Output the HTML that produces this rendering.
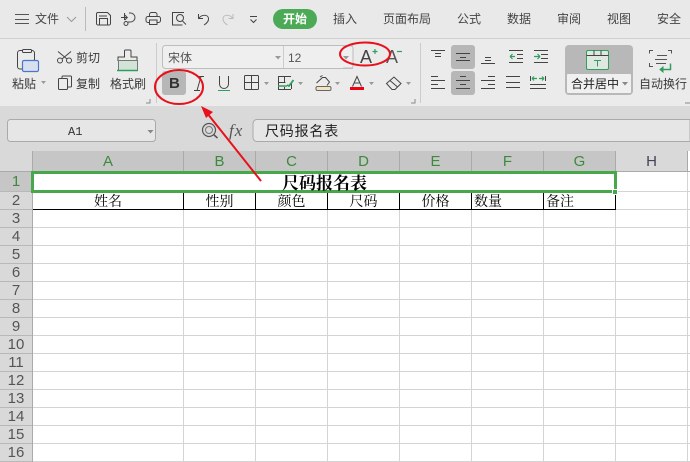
<!DOCTYPE html>
<html><head><meta charset="utf-8">
<style>
html,body{margin:0;padding:0}
body{width:690px;height:462px;overflow:hidden;position:relative;background:#fff;font-family:"Liberation Sans","Noto Sans CJK SC",sans-serif;color:#333}
.a{position:absolute;white-space:nowrap}
.t{position:absolute;white-space:nowrap;font-size:12px;line-height:16px;color:#3a3a3a}
.m{position:absolute;white-space:nowrap;font-size:12px;line-height:16px;top:11px;color:#444}
.ch{position:absolute;top:151px;height:20px;line-height:21px;text-align:center;font-size:15px;color:#3c8a3c;border-right:1px solid #aaa;box-sizing:border-box}
.rh{position:absolute;left:0;width:32px;height:18px;line-height:18px;text-align:center;font-size:15px;color:#555;box-sizing:border-box;border-bottom:1px solid #b8b8b8}
.c{position:absolute;top:192px;height:18px;line-height:22px;overflow:hidden;font-size:14px;color:#000;font-family:"Liberation Serif","WenQuanYi Zen Hei","Noto Serif CJK SC",serif;text-align:center;border-right:1px solid #000;border-bottom:1px solid #000;box-sizing:border-box}
</style></head><body>
<div class="a" style="left:0;top:0;width:690px;height:38px;background:#e9e9e9;border-bottom:1px solid #d0d0d0;box-sizing:content-box"></div>
<div class="a" style="left:0;top:39px;width:690px;height:67px;background:#ebebeb"></div>
<div class="a" style="left:0;top:106px;width:690px;height:45px;background:#d9d9d9"></div>

<svg class="a" style="left:0;top:0" width="690" height="151" fill="none" stroke="#555" stroke-width="1">
<path d="M15 14.500h14M15 19.500h14M15 23.500h14"/>
<path d="M67 17l4.500 4.500 4.500-4.500" stroke="#999"/>
<path d="M85.500 7v24" stroke="#bbb"/>
<!-- save -->
<path d="M98 12.500h9.500l3 3v8a1.500 1.500 0 0 1-1.500 1.500H98a1.500 1.500 0 0 1-1.500-1.500v-9.500a1.500 1.500 0 0 1 1.500-1.500zM99.500 25v-6.500h8V25M99 16h8" stroke="#444"/>
<!-- route -->
<path d="M121 17.500h6M124.800 15l2.500 2.500-2.500 2.500M129 13h1.500a4.500 4.500 0 0 1 0 9H128" stroke="#444"/><circle cx="126" cy="23.500" r="2" stroke="#444"/><path d="M124.500 13v7" stroke="#444"/>
<!-- print -->
<path d="M149.500 16.500v-2a2 2 0 0 1 2-2h3.500a2 2 0 0 1 2 2v2M149.500 22.500h-1.500a2 2 0 0 1-2-2v-2a2 2 0 0 1 2-2h10.500a2 2 0 0 1 2 2v2a2 2 0 0 1-2 2H157M149.500 20h7.500v4.500h-7.500z" stroke="#444"/>
<!-- preview -->
<path d="M183.500 13v-.500h-11v12.500h10" stroke="#444"/><circle cx="180" cy="18" r="3.500" stroke="#444"/><path d="M182.500 21l3.500 3.500" stroke="#444"/>
<!-- undo -->
<path d="M198.500 14v4.500h4.500M199 18.500c2-4 9-4.500 9.500 0 .3 3-2 5-4.500 6.500" stroke="#444"/>
<path stroke="#bbb" d="M233 14v4.500h-4.500M232.500 18.500c-2-4-9-4.500-9.500 0-.3 3 2 5 4.500 6.500"/>
<path d="M250 16.500h7M250.500 19.500l3 3 3-3" stroke="#444"/>
<path d="M156.500 43v60M420.500 43v60" stroke="#ccc"/>
<path d="M146 103h4v-4M411 103h4v-4M685 103h5" stroke="#888"/>
<!-- paste -->
<rect x="17.500" y="50.500" width="17" height="18.500" rx="2.500" stroke="#444"/>
<rect x="22.500" y="49.500" width="9" height="3" rx="1" fill="#ebebeb" stroke="#444"/>
<rect x="22.500" y="60.500" width="16" height="11" rx="1.500" fill="#d8dfee" stroke="#4a78c8" stroke-width="1.200"/>
<!-- scissors -->
<path d="M58 51.500l9 7.500M71 51.500l-9 7.500" stroke="#444"/>
<circle cx="60" cy="60.500" r="2.500" stroke="#444"/><circle cx="69" cy="60.500" r="2.500" stroke="#444"/>
<!-- copy -->
<rect x="58.500" y="78.500" width="9" height="11" rx="1" stroke="#444"/><path d="M62 78v-1a1 1 0 0 1 1-1h7.500a1 1 0 0 1 1 1v9a1 1 0 0 1-1 1H68" stroke="#444"/>
<!-- brush -->
<path d="M124.500 57v-6a1 1 0 0 1 1-1h4.500a1 1 0 0 1 1 1v6h6v3.500h-19V57z" stroke="#444"/>
<rect x="118.500" y="60.500" width="19" height="10" fill="#d2e3d8" stroke="#777"/>
<path d="M117 70.500h21" stroke="#2f9e5e" stroke-width="1.500"/>
<!-- font combo -->
<rect x="162.500" y="45.500" width="215" height="23" rx="3" fill="#efefef" stroke="#bdbdbd"/>
<path d="M283.500 46v22" stroke="#ccc"/>
<path d="M275 56h6l-3 3.500z" fill="#999" stroke="none"/>
<path d="M343 56h6l-3 3.500z" fill="#999" stroke="none"/>
<rect x="353" y="45" width="40" height="24" fill="#ebebeb" stroke="none"/>
<path d="M343 46h8a2 2 0 0 1 2 2v18a2 2 0 0 1-2 2h-8" stroke="#bdbdbd"/>
<!-- bold bg -->
<rect x="162" y="71" width="24" height="24" rx="3" fill="#b7b7b7" stroke="none"/>
<!-- italic -->
<path d="M198 76.500h6M194 90.500h6M201 76.500l-4 14" stroke="#444"/>
<!-- underline -->
<path d="M219.500 76v8a4.500 4.500 0 0 0 9 0v-8" stroke="#444"/>
<path d="M218 90.500h12" stroke="#2f9e5e"/>
<!-- border -->
<rect x="244.500" y="75.500" width="14" height="14" rx="1" stroke="#444"/><path d="M251.500 75v15M244 82.500h15" stroke="#444"/>
<path d="M264 82h5l-2.500 3z M298 82h5l-2.500 3z M335 82h5l-2.500 3z M369 82h5l-2.500 3z M406 82h5l-2.500 3z M41 81h5l-2.500 3z" fill="#999" stroke="none"/>
<!-- conditional -->
<path d="M291 76.500h-12.500v13H291M278.500 82.500h7M284.500 76v6M284.500 87v3M291.500 83v6" stroke="#444"/>
<path d="M287 85l2 1 4.500-6" stroke="#2f9e5e" stroke-width="1.800"/><path d="M278 86h9" stroke="#2f9e5e" stroke-width="1.500"/>
<!-- fill -->
<path d="M316.500 83l6-5.500h3l4 4.500-2.500 3.500M320 77l2.500-1.500" stroke="#444"/>
<rect x="316" y="86.500" width="15" height="4" rx="1.500" fill="#f4e3c0" stroke="#666"/>
<!-- A+ A- marks -->
<path d="M372.500 51.500h5M375 49v5" stroke="#2f9e5e" stroke-width="1.200"/>
<path d="M397 51.500h5" stroke="#2f9e5e" stroke-width="1.200"/>
<!-- text color -->
<path d="M352.500 86.500l4.500-10 4.500 10M354 83h6" stroke="#444"/>
<path d="M350 88.500h14" stroke="#f00010" stroke-width="3"/>
<!-- eraser -->
<path d="M386.500 83.500l7.500-6.500 7 6.500-6 6h-3z" stroke="#444"/><path d="M390 80.500l7.500 6.500" stroke="#444"/>
<!-- align -->
<rect x="451" y="45" width="24" height="24" rx="3" fill="#b7b7b7" stroke="none"/>
<rect x="451" y="71" width="24" height="24" rx="3" fill="#b7b7b7" stroke="none"/>
<g stroke="#444">
<path d="M431 50.500h14M435 53.500h6M435 56.500h6"/>
<path d="M456 53.500h14M460 57.500h6M456 60.500h14"/>
<path d="M485 57.500h6M485 60.500h6M481 63.500h14"/>
<path d="M509 50.500h14M517 54.500h6M517 58.500h6M509 62.500h14"/>
<path d="M534 50.500h14M541 54.500h7M541 58.500h7M534 62.500h14"/>
<path d="M431 76.500h7M431 80.500h14M431 84.500h7M431 88.500h14"/>
<path d="M460 76.500h6M456 80.500h14M460 84.500h6M456 88.500h14"/>
<path d="M488 76.500h7M481 80.500h14M488 84.500h7M481 88.500h14"/>
<path d="M506 76.500h14M506 82.500h14M506 87.500h14"/>
<path d="M530.500 76v5M545.500 76v5M530 84.500h16M530 88.500h16"/>
</g>
<path d="M510 56.500h5M510 56.500l2.500-2.500M510 56.500l2.500 2.500M534 56.500h6M540 56.500l-2.500-2.500M540 56.500l-2.500 2.500M532 78.500h5M532 78.500l2-2M532 78.500l2 2M539 78.500h5M544 78.500l-2-2M544 78.500l-2 2" stroke="#2f9e5e" stroke-width="1.200"/>
<!-- merge -->
<rect x="565" y="45" width="68" height="50" rx="4" fill="#b8b8b8" stroke="none"/>
<rect x="567" y="74" width="64" height="19" rx="1" fill="#f0f0f0" stroke="none"/>
<rect x="586.500" y="50.500" width="22" height="19" rx="1.500" fill="#dfe8e0" stroke="#2f9e5e"/>
<path d="M586.500 55.500h22M594 50.500v5M601 50.500v5" stroke="#444"/>
<path d="M594 60.500h7M597.500 60.500v6" stroke="#2f9e5e"/>
<path d="M622 82h6l-3 3.500z" fill="#888" stroke="none"/>
<!-- wrap -->
<path d="M653 50.500h-3.500v3M668 50.500h3.500v3M649.500 63v3.500h3.500M657 55.500h10M655 59.500h12M656 63.500h10" stroke="#555"/>
<path d="M663 69.500h7.500v-6" stroke="#2f9e5e" stroke-width="1.500"/><path d="M660 69.500l3-2.500v5z" stroke="#2f9e5e" fill="#2f9e5e"/>
<!-- formula bar -->
<rect x="7.500" y="119.500" width="148" height="22" rx="3" fill="#e6e6e6" stroke="#aaa"/>
<path d="M147.500 130h6l-3 3.500z" fill="#888" stroke="none"/>
<circle cx="209" cy="130" r="6.500" stroke="#555" stroke-width="1.200"/><circle cx="209" cy="130" r="3.500" stroke="#777"/><path d="M213.500 134.500l4 3.500" stroke="#555" stroke-width="1.500"/>
<path d="M690 119.500H257a4 4 0 0 0-4 4v14a4 4 0 0 0 4 4H690z" fill="#e6e6e6" stroke="#aaa"/>
<path d="M16 168L28 156V168z" fill="#bcbcbc" stroke="none"/>
</svg>

<div class="m" style="left:35px">文件</div>
<div class="a" style="left:273px;top:9px;width:44px;height:20px;background:#4caa57;border-radius:10px;color:#fff;text-align:center;font-size:12px;line-height:20px;font-weight:bold">开始</div>
<div class="m" style="left:333px">插入</div>
<div class="m" style="left:383px">页面布局</div>
<div class="m" style="left:457px">公式</div>
<div class="m" style="left:507px">数据</div>
<div class="m" style="left:557px">审阅</div>
<div class="m" style="left:607px">视图</div>
<div class="m" style="left:657px">安全</div>

<div class="t" style="left:76px;top:50px">剪切</div>
<div class="t" style="left:76px;top:76px">复制</div>
<div class="t" style="left:12px;top:76px">粘贴</div>
<div class="t" style="left:110px;top:76px">格式刷</div>
<div class="t" style="left:168px;top:50px;color:#555">宋体</div>
<div class="t" style="left:288px;top:50px;color:#555">12</div>
<div class="a" style="left:169px;top:75px;font-size:15px;line-height:18px;font-weight:bold;color:#333">B</div>
<div class="a" style="left:360px;top:47px;font-size:18px;line-height:20px;color:#444">A</div>
<div class="a" style="left:386px;top:47px;font-size:18px;line-height:20px;color:#555">A</div>
<div class="t" style="left:571px;top:76px;color:#222">合并居中</div>
<div class="t" style="left:639px;top:76px">自动换行</div>

<div class="a" style="left:68px;top:125px;font:12px/14px 'Liberation Mono',monospace;color:#333">A1</div>
<div class="a" style="left:229px;top:122px;font:italic 17px/18px 'Liberation Serif',serif;color:#555;letter-spacing:1px">fx</div>
<div class="a" style="left:265px;top:123px;font-family:'WenQuanYi Zen Hei','Noto Sans CJK SC',sans-serif;font-size:14px;line-height:17px;letter-spacing:.8px;color:#222">尺码报名表</div>

<!-- sheet -->
<div class="a" style="left:0;top:151px;width:33px;height:311px;background:#d9d9d9;border-right:1px solid #aaa;box-sizing:border-box"></div>
<div class="a" style="left:33px;top:191px;width:657px;height:271px;background-color:#fff;background-image:repeating-linear-gradient(to bottom,#d4d4d4 0,#d4d4d4 1px,transparent 1px,transparent 18px)"></div>
<div class="a" style="left:183px;top:171px;width:1px;height:291px;background:#d4d4d4;box-shadow:72px 0 #d4d4d4,144px 0 #d4d4d4,216px 0 #d4d4d4,288px 0 #d4d4d4,360px 0 #d4d4d4,432px 0 #d4d4d4,504px 0 #d4d4d4"></div>

<div class="ch" style="left:33px;width:151px;background:#c6c6c6">A</div>
<div class="ch" style="left:184px;width:72px;background:#c6c6c6">B</div>
<div class="ch" style="left:256px;width:72px;background:#c6c6c6">C</div>
<div class="ch" style="left:328px;width:72px;background:#c6c6c6">D</div>
<div class="ch" style="left:400px;width:72px;background:#c6c6c6">E</div>
<div class="ch" style="left:472px;width:72px;background:#c6c6c6">F</div>
<div class="ch" style="left:544px;width:72px;background:#c6c6c6">G</div>
<div class="ch" style="left:616px;width:72px;color:#445;background:#d9d9d9">H</div>
<div class="a" style="left:0;top:171px;width:690px;height:1px;background:#aaa"></div>

<div class="rh" style="top:172px;height:20px;line-height:20px;background:#c6c6c6;color:#3c8a3c">1</div>
<div class="rh" style="top:192px">2</div>
<div class="rh" style="top:210px">3</div>
<div class="rh" style="top:228px">4</div>
<div class="rh" style="top:246px">5</div>
<div class="rh" style="top:264px">6</div>
<div class="rh" style="top:282px">7</div>
<div class="rh" style="top:300px">8</div>
<div class="rh" style="top:318px">9</div>
<div class="rh" style="top:336px">10</div>
<div class="rh" style="top:354px">11</div>
<div class="rh" style="top:372px">12</div>
<div class="rh" style="top:390px">13</div>
<div class="rh" style="top:408px">14</div>
<div class="rh" style="top:426px">15</div>
<div class="rh" style="top:444px">16</div>

<div class="c" style="left:33px;width:151px">姓名</div>
<div class="c" style="left:184px;width:72px">性别</div>
<div class="c" style="left:256px;width:72px">颜色</div>
<div class="c" style="left:328px;width:72px">尺码</div>
<div class="c" style="left:400px;width:72px">价格</div>
<div class="c" style="left:472px;width:72px;text-align:left;padding-left:2px">数量</div>
<div class="c" style="left:544px;width:72px;text-align:left;padding-left:2px">备注</div>

<div class="a" style="left:31px;top:171px;width:586px;height:22px;border:3px solid #46a84a;box-sizing:border-box;background:#fff"></div>
<div class="a" style="left:32px;top:174px;width:585px;height:19px;line-height:20px;text-align:center;font-size:17px;font-weight:bold;color:#000;font-family:'Liberation Serif','Noto Serif CJK SC',serif">尺码报名表</div>
<div class="a" style="left:612px;top:189px;width:6px;height:6px;background:#46a84a;border:1px solid #fff;box-sizing:border-box"></div>

<!-- annotations -->
<svg class="a" style="left:0;top:0" width="690" height="462" fill="none" stroke="#e8101a" stroke-width="2">
<ellipse cx="179" cy="87" rx="24" ry="17"/>
<ellipse cx="365" cy="54" rx="25" ry="11.500"/>
<path d="M261 181L207 113"/>
<path d="M201 106l12 6-7 6z" fill="#e8101a" stroke="none"/>
</svg>
</body></html>
